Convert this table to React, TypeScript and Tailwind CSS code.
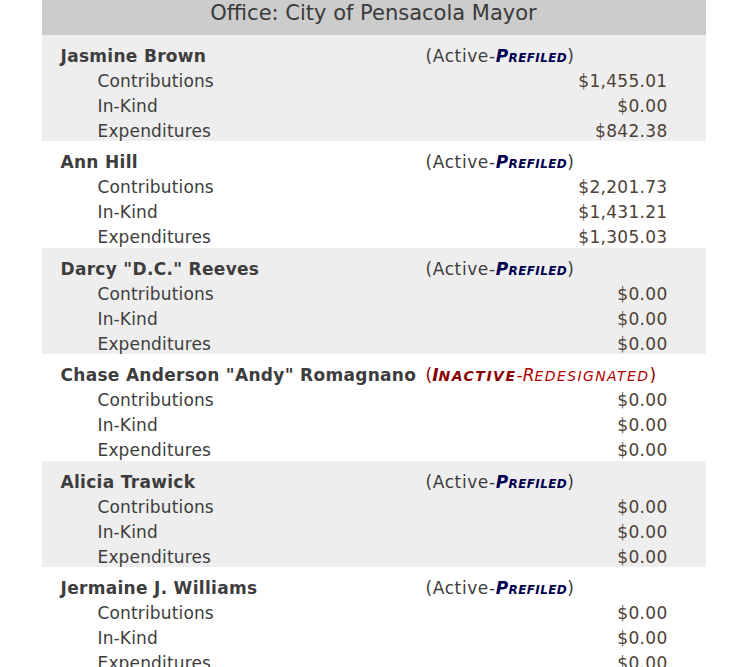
import React from "react";

type Candidate = {
  name: string;
  status: "prefiled" | "redesignated";
  contributions: string;
  inKind: string;
  expenditures: string;
};

const candidates: Candidate[] = [
  { name: "Jasmine Brown", status: "prefiled", contributions: "$1,455.01", inKind: "$0.00", expenditures: "$842.38" },
  { name: "Ann Hill", status: "prefiled", contributions: "$2,201.73", inKind: "$1,431.21", expenditures: "$1,305.03" },
  { name: 'Darcy "D.C." Reeves', status: "prefiled", contributions: "$0.00", inKind: "$0.00", expenditures: "$0.00" },
  { name: 'Chase Anderson "Andy" Romagnano', status: "redesignated", contributions: "$0.00", inKind: "$0.00", expenditures: "$0.00" },
  { name: "Alicia Trawick", status: "prefiled", contributions: "$0.00", inKind: "$0.00", expenditures: "$0.00" },
  { name: "Jermaine J. Williams", status: "prefiled", contributions: "$0.00", inKind: "$0.00", expenditures: "$0.00" },
];

function Status({ status }: { status: Candidate["status"] }) {
  if (status === "redesignated") {
    return (
      <span className="text-[#8b0000]">
        (
        <span className="font-bold italic">
          I<span className="text-[14px] tracking-[1.5px]">NACTIVE</span>
        </span>
        <span className="italic text-[#b00000]">
          -R<span className="text-[14px] tracking-[1.4px]">EDESIGNATED</span>
        </span>
        )
      </span>
    );
  }
  return (
    <span className="tracking-[0.6px]">
      (Active-
      <span className="font-bold italic tracking-[0.4px] [font-variant:small-caps] text-[#000050]">Prefiled</span>)
    </span>
  );
}

function Row({ label, amount }: { label: string; amount: string }) {
  return (
    <div className="grid h-[25px] grid-cols-[365px_1fr] items-center pt-[3px]">
      <div className="pl-[37px] tracking-[0.15px]">{label}</div>
      <div className="text-right tracking-[0.3px] text-[#4d4236]">{amount}</div>
    </div>
  );
}

export default function App() {
  return (
    <div className="min-h-screen bg-white [font-family:'DejaVu_Sans',Verdana,sans-serif] text-[17px] text-[#3d3d3d]">
      <div className="mx-auto w-[664px]">
        <div className="flex h-[35px] justify-center bg-[#cccccc] text-[21px] leading-[26px] text-[#3a3a3a]">
          Office: City of Pensacola Mayor
        </div>
        {candidates.map((c, i) => (
          <div
            key={c.name}
            className={`pl-[19px] pr-[38px] pt-[6px] pb-[0.4px] ${i % 2 === 0 ? "bg-[#eeeeee]" : "bg-white"}`}
          >
            <div className="grid h-[25px] grid-cols-[365px_1fr] items-center pt-[3px]">
              <div className="font-bold tracking-[0.3px]">{c.name}</div>
              <div>
                <Status status={c.status} />
              </div>
            </div>
            <Row label="Contributions" amount={c.contributions} />
            <Row label="In-Kind" amount={c.inKind} />
            <Row label="Expenditures" amount={c.expenditures} />
          </div>
        ))}
      </div>
    </div>
  );
}
